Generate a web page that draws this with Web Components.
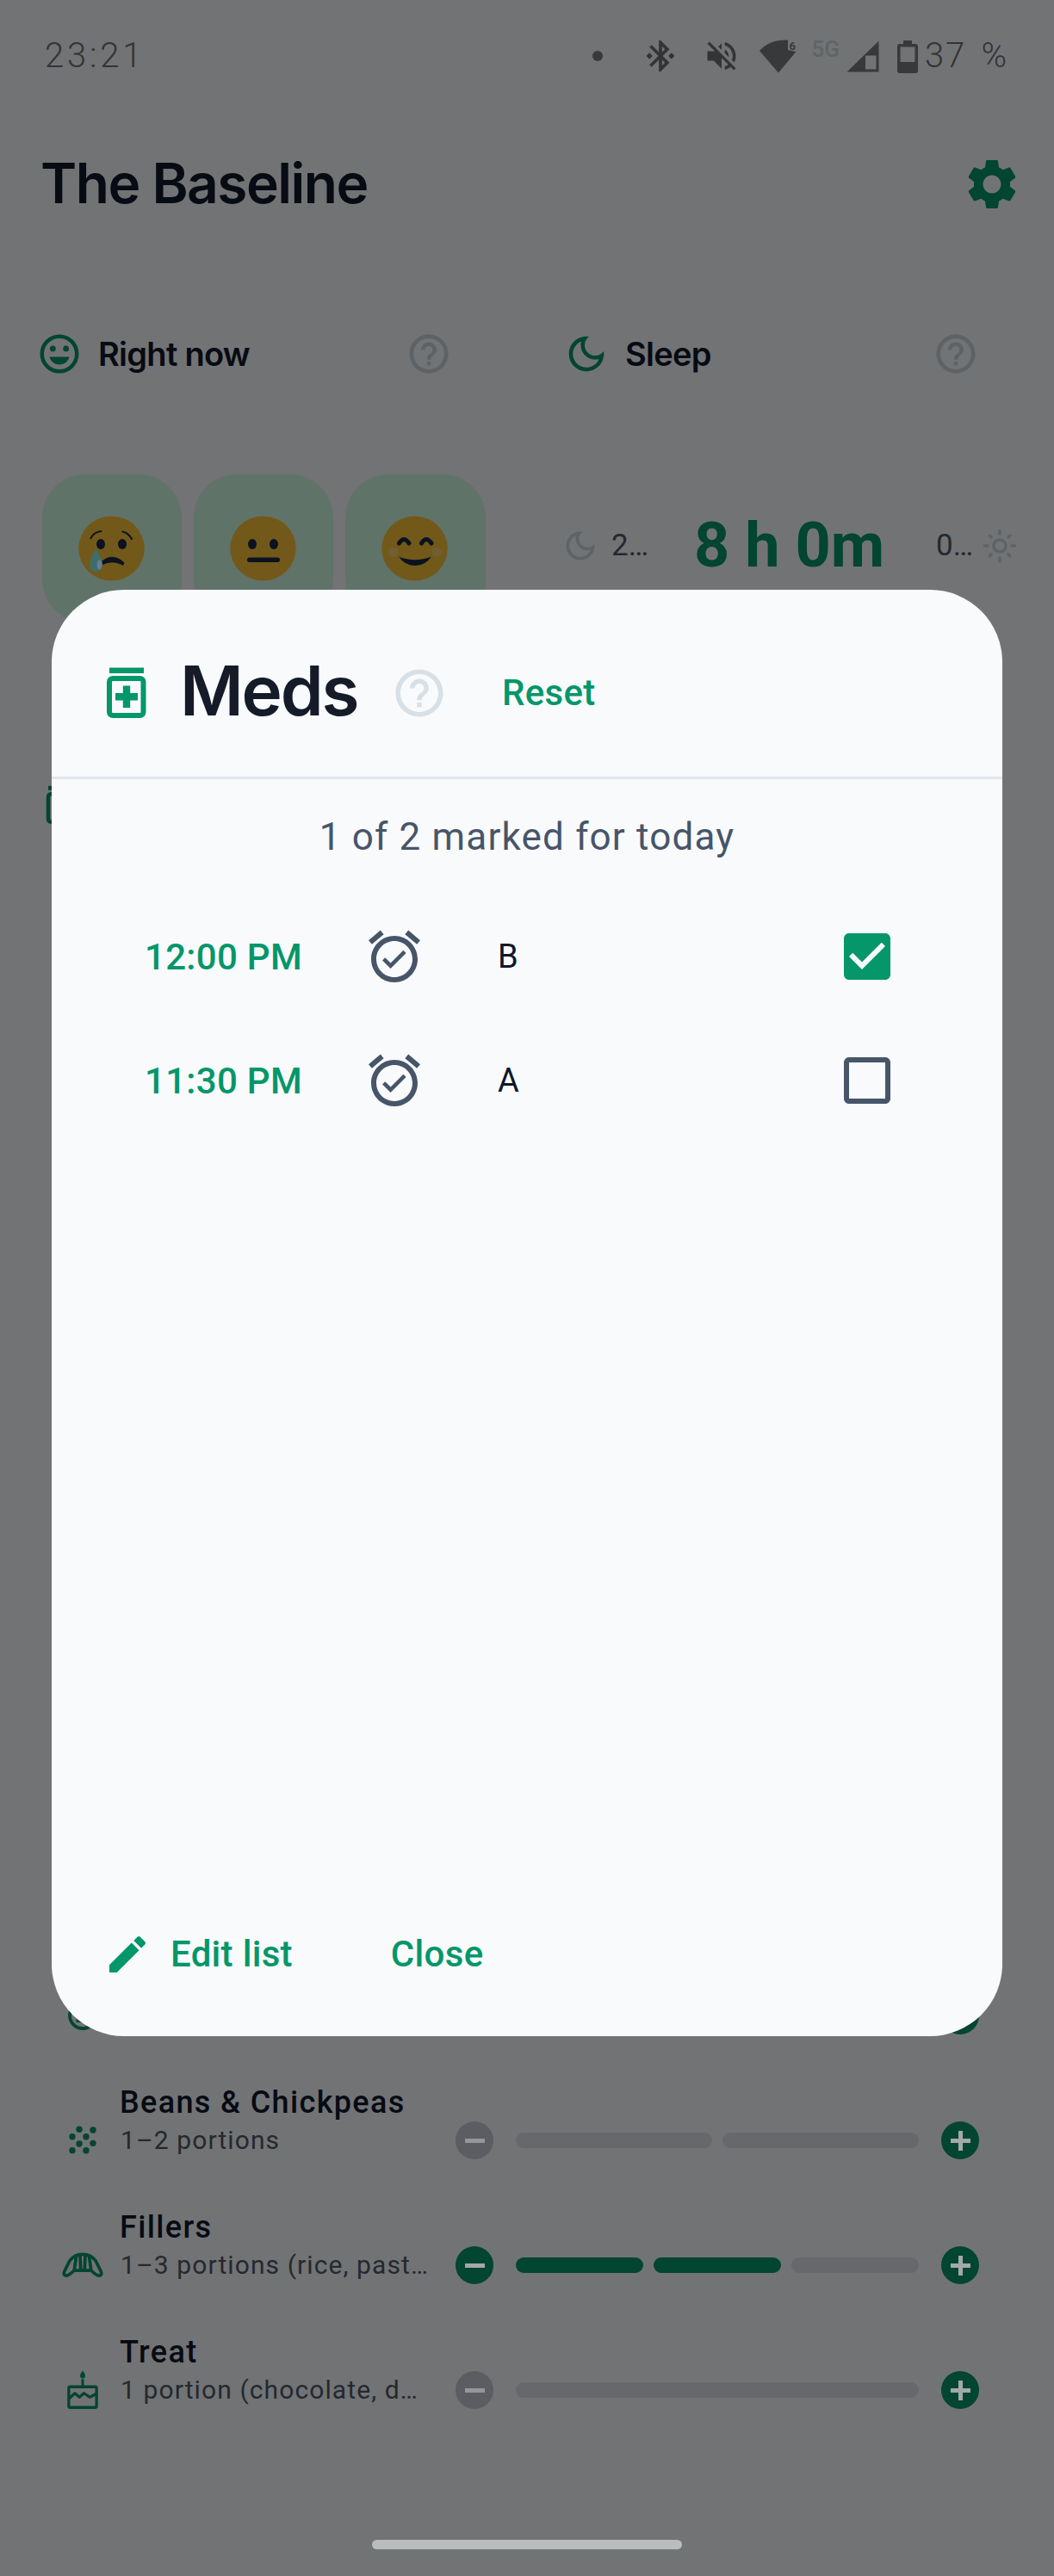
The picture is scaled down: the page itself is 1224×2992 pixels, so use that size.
<!DOCTYPE html>
<html lang="en"><head><meta charset="utf-8"><title>The Baseline</title>
<style>
html,body{margin:0;padding:0;background:#727375}
body{font-family:Roboto,"Liberation Sans",sans-serif}
</style></head><body>
<bl-app></bl-app>
<script>
const ICONS={
 help:'<path d="M11 18h2v-2h-2v2zm1-16C6.48 2 2 6.48 2 12s4.48 10 10 10 10-4.48 10-10S17.52 2 12 2zm0 18c-4.41 0-8-3.59-8-8s3.59-8 8-8 8 3.59 8 8-3.59 8-8 8zm0-14c-2.21 0-4 1.79-4 4h2c0-1.1.9-2 2-2s2 .9 2 2c0 2-3 1.75-3 5h2c0-2.25 3-2.5 3-5 0-2.21-1.79-4-4-4z"/>',
 gear:'<path d="M19.14 12.94c.04-.3.06-.61.06-.94 0-.32-.02-.64-.07-.94l2.03-1.58c.18-.14.23-.41.12-.61l-1.92-3.32c-.12-.22-.37-.29-.59-.22l-2.39.96c-.5-.38-1.03-.7-1.62-.94l-.36-2.54c-.04-.24-.24-.41-.48-.41h-3.84c-.24 0-.43.17-.47.41l-.36 2.54c-.59.24-1.13.57-1.62.94l-2.39-.96c-.22-.08-.47 0-.59.22L2.74 8.87c-.12.21-.08.47.12.61l2.03 1.58c-.05.3-.09.63-.09.94s.02.64.07.94l-2.03 1.58c-.18.14-.23.41-.12.61l1.92 3.32c.12.22.37.29.59.22l2.39-.96c.5.38 1.03.7 1.62.94l.36 2.54c.05.24.24.41.48.41h3.84c.24 0 .44-.17.47-.41l.36-2.54c.59-.24 1.13-.56 1.62-.94l2.39.96c.22.08.47 0 .59-.22l1.92-3.32c.12-.22.07-.47-.12-.61l-2.01-1.58zM12 15.6c-1.98 0-3.6-1.62-3.6-3.6s1.62-3.6 3.6-3.6 3.6 1.62 3.6 3.6-1.62 3.6-3.6 3.6z"/>',
 smile:'<circle cx="12" cy="12" r="9" fill="none" stroke="currentColor" stroke-width="2"/><circle cx="8.6" cy="9.3" r="1.5"/><circle cx="15.4" cy="9.3" r="1.5"/><path d="M6.9 13.6h10.2C16.6 15.9 14.5 17.6 12 17.6S7.400 15.900 6.900 13.600z"/>',
 moon:'<path d="M9.37 5.510C9.190 6.150 9.100 6.820 9.100 7.500c0 4.080 3.320 7.400 7.400 7.400.68 0 1.350-.09 1.990-.27C17.450 17.190 14.930 19 12 19c-3.860 0-7-3.140-7-7C5 9.070 6.810 6.550 9.370 5.510zM12 3c-4.970 0-9 4.030-9 9s4.030 9 9 9 9-4.030 9-9c0-.46-.04-.92-.1-1.360-.98 1.370-2.580 2.260-4.400 2.260-2.980 0-5.400-2.420-5.400-5.400 0-1.810.89-3.420 2.260-4.400C12.920 3.040 12.460 3 12 3z"/>',
 sun:'<path d="M12 9c1.650 0 3 1.350 3 3s-1.350 3-3 3-3-1.350-3-3 1.350-3 3-3m0-2c-2.760 0-5 2.240-5 5s2.240 5 5 5 5-2.240 5-5-2.240-5-5-5zM2 13h2c.55 0 1-.45 1-1s-.45-1-1-1H2c-.55 0-1 .45-1 1s.45 1 1 1zm18 0h2c.55 0 1-.45 1-1s-.45-1-1-1h-2c-.55 0-1 .45-1 1s.45 1 1 1zM11 2v2c0 .55.45 1 1 1s1-.45 1-1V2c0-.55-.45-1-1-1s-1 .45-1 1zm0 18v2c0 .55.45 1 1 1s1-.45 1-1v-2c0-.55-.45-1-1-1s-1 .45-1 1zM5.990 4.580c-.39-.39-1.030-.39-1.410 0-.39.39-.39 1.030 0 1.410l1.060 1.060c.39.39 1.030.39 1.410 0s.39-1.030 0-1.410L5.990 4.580zm12.370 12.370c-.39-.39-1.030-.39-1.410 0-.39.39-.39 1.030 0 1.410l1.060 1.060c.39.39 1.030.39 1.410 0 .39-.39.39-1.030 0-1.410l-1.060-1.060zm1.060-10.960c.39-.39.39-1.030 0-1.410-.39-.39-1.030-.39-1.410 0l-1.060 1.060c-.39.39-.39 1.030 0 1.410s1.030.39 1.410 0l1.060-1.060zM7.050 18.360c.39-.39.39-1.030 0-1.410-.39-.39-1.030-.39-1.410 0l-1.060 1.060c-.39.39-.39 1.030 0 1.410s1.030.39 1.410 0l1.060-1.060z"/>',
 alarm:'<path d="M22 5.720l-4.600-3.860-1.290 1.530 4.600 3.860L22 5.720zM7.880 3.390L6.600 1.860 2 5.710l1.290 1.530 4.590-3.850zM12 4c-4.970 0-9 4.030-9 9s4.020 9 9 9c4.970 0 9-4.030 9-9s-4.030-9-9-9zm0 16c-3.870 0-7-3.130-7-7s3.130-7 7-7 7 3.130 7 7-3.130 7-7 7z"/><path d="M10.540 14.530L8.410 12.400l-1.060 1.060 3.180 3.180 6-6-1.060-1.060z"/>',
 checked:'<path d="M19 3H5c-1.110 0-2 .9-2 2v14c0 1.100.89 2 2 2h14c1.110 0 2-.9 2-2V5c0-1.100-.89-2-2-2zm-9 14l-5-5 1.410-1.410L10 14.170l7.590-7.590L19 8l-9 9z"/>',
 unchecked:'<path d="M19 5v14H5V5h14m0-2H5c-1.100 0-2 .9-2 2v14c0 1.100.9 2 2 2h14c1.100 0 2-.9 2-2V5c0-1.100-.9-2-2-2z"/>',
 edit:'<path d="M3 17.250V21h3.750L17.810 9.940l-3.750-3.750L3 17.250zM20.710 7.040c.39-.39.39-1.020 0-1.410l-2.340-2.340c-.39-.39-1.020-.39-1.410 0l-1.830 1.830 3.750 3.750 1.830-1.830z"/>',
 bt:'<path d="M7 12l-2-2-2 2 2 2 2-2zm10.710-4.290L12 2h-1v7.590L6.410 5 5 6.410 10.590 12 5 17.590 6.410 19 11 14.410V22h1l5.710-5.710-4.300-4.290 4.300-4.290zM13 5.830l1.880 1.880L13 9.590V5.830zm1.880 10.460L13 18.170v-3.760l1.880 1.880zM19 10l-2 2 2 2 2-2-2-2z"/>',
 mute:'<path d="M16.500 12c0-1.770-1.020-3.290-2.500-4.030v2.210l2.450 2.450c.03-.2.05-.41.05-.63zm2.500 0c0 .94-.2 1.820-.54 2.640l1.510 1.510C20.630 14.910 21 13.500 21 12c0-4.280-2.990-7.860-7-8.770v2.060c2.890.86 5 3.540 5 6.710zM4.270 3L3 4.270 7.730 9H3v6h4l5 5v-6.730l4.250 4.250c-.67.52-1.420.93-2.250 1.180v2.060c1.380-.31 2.630-.95 3.690-1.810L19.730 21 21 19.730l-9-9L4.270 3zM12 4L9.910 6.090 12 8.180V4z"/>'
};
/* icons drawn on a 72-unit box rather than the 24-unit Material grid */
const ICONS72={
 meds:'<rect x="16" y="6.500" width="40" height="6.500"/><rect x="16" y="19" width="39.500" height="43" rx="4" fill="none" stroke="currentColor" stroke-width="6"/><path d="M31.800 27.500h8.400V36H49v8.400h-8.800V53h-8.400v-8.600H23V36h8.800z"/>',
 grain:'<g><circle cx="30.700" cy="19" r="4.900"/><circle cx="52" cy="20" r="4.900"/><circle cx="20" cy="30.300" r="4.900"/><circle cx="41.300" cy="30.300" r="4.900"/><circle cx="30.700" cy="41.300" r="4.900"/><circle cx="52" cy="40.400" r="4.900"/><circle cx="20" cy="51.600" r="4.900"/><circle cx="41.300" cy="51.600" r="4.900"/></g>',
 croissant:'<g fill="none" stroke="currentColor" stroke-width="5" stroke-linejoin="round" stroke-linecap="round"><path d="M11 52C7 52 6 49 8 45L16 29C21 22 28 19 36 19S51 22 56 29L64 45C66 49 65 52 61 52 57 52 53 48 49 44H23C19 48 15 52 11 52z"/><path d="M23 44L26 22M49 44L46 22M33 44L32 20M39 44L40 20"/></g>',
 cake:'<path d="M36 6C33 10 32 12 32 14 32 16.500 34 18 36 18S40 16.500 40 14C40 12 39 10 36 6z"/><rect x="34" y="19" width="4" height="12"/><g fill="none" stroke="currentColor" stroke-width="4.400" stroke-linejoin="round"><rect x="14.500" y="31" width="43" height="32" rx="2"/><path d="M15 49L24 41 31 47 38 41 47 47 57 42"/></g>',
 ring:'<circle cx="36" cy="36" r="20" fill="none" stroke="currentColor" stroke-width="5"/><path d="M26 44h20" stroke="currentColor" stroke-width="5"/>'
};
class BlIcon extends HTMLElement{
 connectedCallback(){
  const n=this.getAttribute('name'),s=this.getAttribute('size')||72,big=ICONS72[n];
  this.shadowRoot||this.attachShadow({mode:'open'});
  this.shadowRoot.innerHTML=`<style>:host{display:block;flex:none;width:${s}px;height:${s}px;line-height:0}svg{display:block;width:100%;height:100%;fill:currentColor}</style><svg viewBox="0 0 ${big?72:24} ${big?72:24}">${big||ICONS[n]}</svg>`;
 }
}
customElements.define('bl-icon',BlIcon);

class BlStatusBar extends HTMLElement{
 constructor(){super();this.attachShadow({mode:'open'}).innerHTML=`<style>
 :host{display:flex;align-items:center;height:130px;padding:0 53px 0 52px;color:#333436;font-family:Roboto,sans-serif;box-sizing:border-box}
 .time{font-size:40px;font-weight:300;letter-spacing:3.800px;line-height:50px;flex:1}
 .dot{width:12px;height:12px;border-radius:50%;background:#38393b;margin-right:45px}
 .fiveg{font-size:26px;font-weight:500;color:#5f6465;line-height:20px;align-self:flex-start;margin:47px 0 0 16px}
 .pct{font-size:40px;font-weight:300;letter-spacing:1.800px;word-spacing:6px;margin-left:8px;line-height:50px}
 svg{display:block;flex:none}
 .six{font-size:13px;font-weight:700;font-family:Roboto,sans-serif;fill:#38393b}
 </style>
 <span class="time">23:21</span><span class="dot"></span>
 <bl-icon name="bt" size="44"></bl-icon>
 <bl-icon name="mute" size="44" style="margin-left:27px"></bl-icon>
 <svg width="46" height="40" viewBox="0 0 46 40" style="margin-left:21px;margin-top:1px"><path d="M23 38.500 1 13C8 5 18 0.500 32 0.500H34V12L43.500 14z" fill="#38393b"/><text class="six" x="35.500" y="12">6</text></svg>
 <span class="fiveg">5G</span>
 <svg width="38" height="37" viewBox="0 0 38 37" style="margin-left:8px;margin-top:1px"><path fill="#38393b" fill-rule="evenodd" d="M37.500.5V36.500H.5zM34.500 17.500H22V33.500H34.500z"/></svg>
 <svg width="24" height="38" viewBox="0 0 24 38" style="margin-left:21px;margin-top:1px"><path fill="#38393b" fill-rule="evenodd" d="M7 0h10v4h4a3 3 0 0 1 3 3v28a3 3 0 0 1-3 3H3a3 3 0 0 1-3-3V7a3 3 0 0 1 3-3h4zM3.500 7.500v17.500h17V7.500z"/></svg>
 <span class="pct">37 %</span>`;}
}
customElements.define('bl-status-bar',BlStatusBar);

class BlSectionHead extends HTMLElement{
 constructor(){super();this.attachShadow({mode:'open'}).innerHTML=`<style>
 :host{display:flex;align-items:center;height:48px;padding:0 87px 0 42px;color:#070b13;font:600 38px/48px Inter,Roboto,sans-serif;letter-spacing:-.72px}
 ::slotted(bl-icon){color:#024530}
 span{flex:1;margin-left:18px}
 .q{color:#5c6265}
 </style><slot name="icon"></slot><span><slot></slot></span><bl-icon class="q" name="help" size="54"></bl-icon>`;}
}
customElements.define('bl-section-head',BlSectionHead);

class BlMoodTile extends HTMLElement{
 constructor(){super();const k=this.getAttribute('kind');
 const f={
  cry:`<path d="M14.500 26Q18 19 26.500 18M51.500 18.500Q58 20 62 27" fill="none" stroke="#0b1220" stroke-width="2.200" stroke-linecap="round"/><ellipse cx="26" cy="33" rx="5" ry="6" fill="#0b1220"/><ellipse cx="51" cy="33" rx="5" ry="6" fill="#0b1220"/><path d="M27 53Q40 42 53.500 54.500L52 58Q40 51 28 57z" fill="#0b1220"/><path d="M20.500 38C24 46 28 50 28 57A7.500 8 0 0 1 13 57C13 50 17 46 20.500 38z" fill="#3e6e6b"/><ellipse cx="24.500" cy="57" rx="2.800" ry="5.500" fill="#6d7b94"/>`,
  flat:`<ellipse cx="26" cy="33" rx="5" ry="6" fill="#0b1220"/><ellipse cx="51" cy="33" rx="5" ry="6" fill="#0b1220"/><rect x="20" y="48.500" width="38" height="5.500" rx="2.700" fill="#0b1220"/>`,
  joy:`<ellipse cx="13.500" cy="42.500" rx="6" ry="5.500" fill="#6f6038" opacity=".8"/><ellipse cx="64.500" cy="42.500" rx="6" ry="5.500" fill="#6f6038" opacity=".8"/><path d="M20.500 32Q26 23 32 32M46.500 32Q52 23 58 32" fill="none" stroke="#0b1220" stroke-width="5" stroke-linecap="round"/><path d="M20 47.500Q39 55 58 47.500Q51 58 39 58T20 47.500z" fill="#0b1220"/>`
 }[k];
 this.attachShadow({mode:'open'}).innerHTML=`<style>
 :host{display:flex;align-items:center;justify-content:center;height:172px;border-radius:50px;background:#607369}
 svg{display:block}
 </style><svg width="78" height="76" viewBox="0 0 78 76"><ellipse cx="38.500" cy="38" rx="38.300" ry="37.500" fill="#72591a"/>${f}</svg>`;}
}
customElements.define('bl-mood-tile',BlMoodTile);

class BlSleep extends HTMLElement{
 constructor(){super();this.attachShadow({mode:'open'}).innerHTML=`<style>
 :host{display:flex;align-items:center;height:172px;padding-bottom:6px;box-sizing:border-box;font-family:Roboto,sans-serif;color:#24292f;margin-left:39.500px}
 bl-icon{color:#5d6366}
 .v{font-size:35px;line-height:40px}
 .big{font-size:72px;font-weight:700;line-height:84px;color:#024530;margin-left:58px;width:281px;white-space:nowrap}
 </style><bl-icon name="moon" size="44"></bl-icon><span class="v" style="margin-left:14.500px;width:38px">2…</span><span class="big">8 h 0m</span><span class="v" style="width:53px">0…</span><bl-icon name="sun" size="42"></bl-icon>`;}
}
customElements.define('bl-sleep',BlSleep);

class BlFoodRow extends HTMLElement{
 constructor(){super();
 const n=+this.getAttribute('segments'),d=+this.getAttribute('done'),t=this.getAttribute('title')||'',s=this.getAttribute('sub')||'',ic=this.getAttribute('icon');
 let bars='';for(let i=0;i<n;i++)bars+=`<i class="${i<d?'on':''}"></i>`;
 this.attachShadow({mode:'open'}).innerHTML=`<style>
 :host{display:block;height:145px;font-family:Roboto,sans-serif}
 .t{height:44px;margin-left:139px;font-size:36px;font-weight:500;line-height:44px;color:#070b13;letter-spacing:1.350px;white-space:nowrap}
 .c{display:flex;align-items:center;height:44px;padding-left:69px}
 bl-icon{color:#024530}
 .s{width:370px;margin:0 20px 0 16px;padding-left:1px;box-sizing:border-box;font-size:30px;line-height:44px;color:#24292f;letter-spacing:1.100px;white-space:nowrap;overflow:hidden}
 .b{flex:none;position:relative;width:44px;height:44px;border-radius:50%;background:#024530}
 .b.off{background:#5b5d62}
 .b::before,.b.plus::after{content:"";position:absolute;left:10.500px;top:19.500px;width:23px;height:5px;background:#a4a9a8}
 .b.off::before{background:#94969a}
 .b.plus::after{left:19.500px;top:10.500px;width:5px;height:23px}
 .bars{display:flex;gap:12px;width:468px;margin:0 26px}
 i{flex:1;height:18px;border-radius:9px;background:#66686c}
 i.on{background:#024530}
 </style><div class="t">${t}</div><div class="c"><bl-icon name="${ic}" size="54"></bl-icon><div class="s">${s}</div><span class="b ${d?'':'off'}"></span><div class="bars">${bars}</div><span class="b plus"></span></div>`;}
}
customElements.define('bl-food-row',BlFoodRow);

class BlMedRow extends HTMLElement{
 constructor(){super();
 const on=this.hasAttribute('checked');
 this.attachShadow({mode:'open'}).innerHTML=`<style>
 :host{display:flex;align-items:center;height:144px;font-family:Roboto,sans-serif;padding:0 121px 0 108px}
 .time{width:254px;font-size:42px;font-weight:500;color:#059669;letter-spacing:.3px;white-space:nowrap}
 .name{flex:1;margin-left:84px;font-size:38px;color:#0f172a}
 bl-icon{color:#475569}
 bl-icon.on{color:#059669}
 </style><span class="time"><slot name="time"></slot></span><bl-icon name="alarm" size="72"></bl-icon><span class="name"><slot></slot></span><bl-icon class="${on?'on':''}" name="${on?'checked':'unchecked'}" size="72"></bl-icon>`;}
}
customElements.define('bl-med-row',BlMedRow);

class BlMedsDialog extends HTMLElement{
 constructor(){super();this.attachShadow({mode:'open'}).innerHTML=`<style>
 :host{position:absolute;left:60px;top:685px;width:1104px;height:1680px;display:flex;flex-direction:column;background:#f8fafc;border-radius:84px;overflow:hidden;font-family:Roboto,sans-serif}
 .head{display:flex;align-items:center;height:217px;box-sizing:border-box;padding:84px 0 61px 51px}
 .head .ic{color:#059669}
 h2{margin:-6px 0 0 26px;font:600 80px/72px Inter,Roboto,sans-serif;color:#151b28;width:245px;letter-spacing:-2.200px}
 .q{color:#d8e0e7}
 .link{font-size:42px;font-weight:500;color:#059669;letter-spacing:.3px;line-height:60px}
 .rule{height:3px;background:#dfe7ee;flex:none}
 .sum{margin:42px 0;text-align:center;font-size:44px;line-height:50px;color:#475569;letter-spacing:1.170px}
 .foot{margin-top:auto;display:flex;align-items:center;height:60px;padding:0 0 65px 60px}
 .foot bl-icon{color:#059669}
 </style>
 <div class="head"><bl-icon class="ic" name="meds" size="72"></bl-icon><h2>Meds</h2><bl-icon class="q" name="help" size="66"></bl-icon><span class="link" style="margin-left:63px">Reset</span></div>
 <div class="rule"></div>
 <div class="sum">1 of 2 marked for today</div>
 <slot></slot>
 <div class="foot"><bl-icon name="edit" size="56"></bl-icon><span class="link" style="margin-left:22px">Edit list</span><span class="link" style="margin-left:114px">Close</span></div>`;}
}
customElements.define('bl-meds-dialog',BlMedsDialog);

class BlApp extends HTMLElement{
 constructor(){super();this.attachShadow({mode:'open'}).innerHTML=`<style>
 :host{display:block;position:relative;width:1224px;height:2992px;overflow:hidden;background:#727375}
 header{display:flex;align-items:center;justify-content:space-between;height:168px;padding:0 37px 0 47px;box-sizing:border-box;color:#070b13;font:600 64px/80px Inter,Roboto,sans-serif;letter-spacing:-1.500px}
 header span{margin-top:-3px}
 header bl-icon{color:#024530}
 .cols{display:grid;grid-template-columns:612px 612px}
 .heads{margin-top:89px}
 .mood{margin-top:116px}
 .tiles{display:grid;grid-template-columns:repeat(3,162.700px);gap:13.500px;padding-left:48.500px}
 .peek{color:#024530;margin:185px 0 0 44px;height:54px}
 .food{margin-top:1313px}
 .home{width:360px;height:11px;border-radius:6px;background:#b9bdbd;margin:95px auto 0}
 </style>
 <bl-status-bar></bl-status-bar>
 <header><span>The Baseline</span><bl-icon name="gear" size="70"></bl-icon></header>
 <div class="cols heads">
  <bl-section-head><bl-icon slot="icon" name="smile" size="54"></bl-icon>Right now</bl-section-head>
  <bl-section-head><bl-icon slot="icon" name="moon" size="54"></bl-icon>Sleep</bl-section-head>
 </div>
 <div class="cols mood">
  <div class="tiles"><bl-mood-tile kind="cry"></bl-mood-tile><bl-mood-tile kind="flat"></bl-mood-tile><bl-mood-tile kind="joy"></bl-mood-tile></div>
  <bl-sleep></bl-sleep>
 </div>
 <div class="peek"><bl-icon name="meds" size="54"></bl-icon></div>
 <div class="food">
  <bl-food-row icon="ring" segments="2" done="1"></bl-food-row>
  <bl-food-row icon="grain" segments="2" done="0" title="Beans &amp; Chickpeas" sub="1–2 portions"></bl-food-row>
  <bl-food-row icon="croissant" segments="3" done="2" title="Fillers" sub="1–3 portions (rice, past…"></bl-food-row>
  <bl-food-row icon="cake" segments="1" done="0" title="Treat" sub="1 portion (chocolate, d…"></bl-food-row>
 </div>
 <div class="home"></div>
 <bl-meds-dialog>
  <bl-med-row checked><span slot="time">12:00 PM</span>B</bl-med-row>
  <bl-med-row><span slot="time">11:30 PM</span>A</bl-med-row>
 </bl-meds-dialog>`;}
}
customElements.define('bl-app',BlApp);
</script>
</body></html>
